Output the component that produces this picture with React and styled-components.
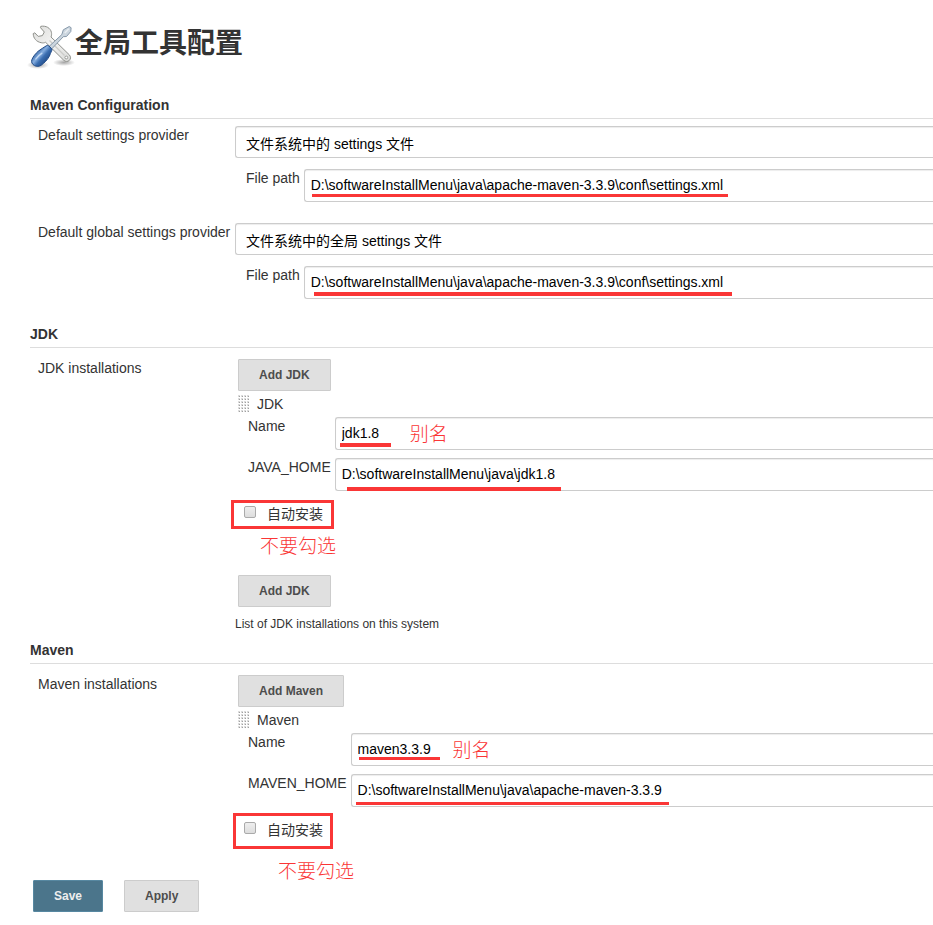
import React, { useState } from 'react'
import styled, { createGlobalStyle } from 'styled-components'

const colors = {
    text: '#333',
    border: '#ccc',
    line: '#ddd',
    mark: '#fa3636',
    primary: '#4b758b',
}

const settingsPath = 'D:\\softwareInstallMenu\\java\\apache-maven-3.3.9\\conf\\settings.xml'

const ToolsIcon = () => (
    <svg width="48" height="48" viewBox="0 0 48 48" aria-hidden="true">
        <defs>
            <linearGradient id="steel" x1="0" y1="0" x2="1" y2="1">
                <stop offset="0" stopColor="#dcdcda" />
                <stop offset="0.5" stopColor="#f4f4f3" />
                <stop offset="1" stopColor="#d8d9d7" />
            </linearGradient>
            <linearGradient id="handle" x1="0.2" y1="0.3" x2="0.75" y2="0.8">
                <stop offset="0" stopColor="#3465a4" />
                <stop offset="0.35" stopColor="#86aee0" />
                <stop offset="0.6" stopColor="#3a6db0" />
                <stop offset="1" stopColor="#204a87" />
            </linearGradient>
            <radialGradient id="shade">
                <stop offset="0" stopColor="#000" stopOpacity="0.35" />
                <stop offset="1" stopColor="#000" stopOpacity="0" />
            </radialGradient>
        </defs>
        <ellipse cx="11" cy="43" rx="11" ry="4" fill="url(#shade)" />
        <ellipse cx="37" cy="40.500" rx="11" ry="3.500" fill="url(#shade)" />
        <path
            d="M13.800 4.300c5.200-.8 9.600 1.600 10.600 6 .4 1.700.2 3.200-.4 4.700L42.300 32.800c1.700 1.900 1.600 4.200 0 5.600-1.600 1.500-3.900 1.500-5.600-.2L18.600 20.300c-1.400.6-2.800.8-4.400.4C9.400 19.800 6.300 16.300 6.200 11.600l1.600-.8 3.400 3.600 4.200-.8 1.900-3.600-3.800-4.300z"
            fill="url(#steel)"
            stroke="#8f918c"
            strokeLinejoin="round"
        />
        <path d="M22.500 18.500l15 15" stroke="#cbccc9" strokeWidth="1.200" />
        <circle cx="39.300" cy="35.500" r="1.400" fill="#fff" stroke="#888a85" strokeWidth="0.800" />
        <path
            d="M22.200 24.300L34.800 12.600l1.500-4.800 5.900-3.300 1.900 1.200-.3 3.800-4.300 5-3.200.2L24.800 26.800z"
            fill="#cbd5de"
            stroke="#8799aa"
            strokeLinejoin="round"
        />
        <path d="M37.800 11l4-4.200" stroke="#e9eef2" strokeWidth="1.400" />
        <path
            d="M19.300 23.800c.9-.6 1.800-.5 2.500.1l2.600 2.600c.7.8.7 1.700.1 2.600-1 1.600-1.300 3.400-2.100 5-1.800 3.600-4.900 6.600-8.300 9.200-1.800 1.300-4.600 1.400-6.600.3-2.400-1.300-3.500-3.600-2.600-6 1.300-3.200 3.600-5.900 6.300-8.400 2.500-2.300 5.500-3.300 8.100-5.400z"
            fill="url(#handle)"
            stroke="#204a87"
        />
        <path d="M8.800 37c1.600-2.600 3.600-4.300 6-5.700" fill="none" stroke="#c3d9f3" strokeWidth="1.400" strokeLinecap="round" />
    </svg>
)

const DragHandle = () => (
    <svg width="12" height="18" viewBox="0 0 12 18" aria-hidden="true">
        {[0, 3, 6, 9, 12, 15].map(y =>
            [0, 3, 6, 9].map(x => (
                <g key={`${x}-${y}`}>
                    <rect x={x} y={y} width="2" height="2" fill="#dcdcdc" />
                    <rect x={x + 1} y={y + 1} width="1" height="1" fill="#a0a0a0" />
                </g>
            ))
        )}
    </svg>
)

const PathField = ({ id, label, value, mark, note }) => {
    const [text, setText] = useState(value)

    return (
        <>
            <Label htmlFor={id}>{label}</Label>
            <InputArea>
                <Input id={id} value={text} onChange={e => setText(e.target.value)} />
                <Underline $left={mark.left} $top={mark.top} $width={mark.width} $thick={mark.thick} />
                {note && <Note $left={note} $top={3}>别名</Note>}
            </InputArea>
        </>
    )
}

const Provider = ({ id, label, option, mark }) => (
    <Row>
        <RowLabel htmlFor={id}>{label}</RowLabel>
        <div>
            <Select id={id}>
                <option>{option}</option>
            </Select>
            <Fields $indent={11} $top={11}>
                <PathField id={`${id}-path`} label="File path" value={settingsPath} mark={mark} />
            </Fields>
        </div>
    </Row>
)

const Installation = ({ tool, homeLabel, name, home, nameMark, homeMark, nameNote, frame, note }) => (
    <>
        <Button type="button" $inset>Add {tool}</Button>
        <ToolTitle>
            <DragHandle />
            {tool}
        </ToolTitle>
        <Fields $indent={13} $top={4}>
            <PathField id={`${tool}-name`} label="Name" value={name} mark={nameMark} note={nameNote} />
            <PathField id={`${tool}-home`} label={homeLabel} value={home} mark={homeMark} />
        </Fields>
        <AutoInstall>
            <Checkbox type="checkbox" id={`${tool}-auto`} />
            <Label htmlFor={`${tool}-auto`}>自动安装</Label>
            <Frame $left={frame.left} $top={frame.top} $width={frame.width} $height={frame.height} />
            <Note $left={note.left} $top={note.top}>不要勾选</Note>
        </AutoInstall>
    </>
)

export default function App() {
    return (
        <>
            <GlobalStyle />
            <Page onSubmit={e => e.preventDefault()}>
                <Header>
                    <ToolsIcon />
                    <h1>全局工具配置</h1>
                </Header>

                <SectionTitle>Maven Configuration</SectionTitle>
                <Section $top={7} $bottom={25}>
                    <Provider
                        id="settings"
                        label="Default settings provider"
                        option="文件系统中的 settings 文件"
                        mark={{ left: 8, top: 25, width: 416, thick: 3 }}
                    />
                    <Provider
                        id="global-settings"
                        label="Default global settings provider"
                        option="文件系统中的全局 settings 文件"
                        mark={{ left: 10, top: 26, width: 418, thick: 4 }}
                    />
                </Section>

                <SectionTitle>JDK</SectionTitle>
                <Section $top={11} $bottom={8}>
                    <Row>
                        <RowLabel as="span">JDK installations</RowLabel>
                        <div>
                            <Installation
                                tool="JDK"
                                homeLabel="JAVA_HOME"
                                name="jdk1.8"
                                home="D:\softwareInstallMenu\java\jdk1.8"
                                nameMark={{ left: 5, top: 26, width: 51, thick: 4 }}
                                homeMark={{ left: 12, top: 29, width: 214, thick: 4 }}
                                nameNote={75}
                                frame={{ left: -4, top: -5, width: 103, height: 29 }}
                                note={{ left: 25, top: 27 }}
                            />
                            <AddAgain>
                                <Button type="button" $inset>Add JDK</Button>
                            </AddAgain>
                            <Help>List of JDK installations on this system</Help>
                        </div>
                    </Row>
                </Section>

                <SectionTitle>Maven</SectionTitle>
                <Section $top={11} $bottom={41}>
                    <Row>
                        <RowLabel as="span">Maven installations</RowLabel>
                        <div>
                            <Installation
                                tool="Maven"
                                homeLabel="MAVEN_HOME"
                                name="maven3.3.9"
                                home="D:\softwareInstallMenu\java\apache-maven-3.3.9"
                                nameMark={{ left: 8, top: 24, width: 81, thick: 3 }}
                                homeMark={{ left: 5, top: 28, width: 313, thick: 3 }}
                                nameNote={102}
                                frame={{ left: -2, top: -8, width: 100, height: 36 }}
                                note={{ left: 43, top: 36 }}
                            />
                        </div>
                    </Row>
                </Section>

                <Actions>
                    <Button type="submit" $primary>Save</Button>
                    <Button type="button">Apply</Button>
                </Actions>
            </Page>
        </>
    )
}

const GlobalStyle = createGlobalStyle`
    * {
        box-sizing: border-box;
    }
    body {
        margin: 0;
        background-color: #fff;
        color: ${colors.text};
        font-family: "Liberation Sans", "Noto Sans CJK SC", sans-serif;
        font-size: 14px;
        line-height: 18px;
    }
    input, select, button {
        font-family: inherit;
    }
`
const Page = styled.form`
    padding: 22px 0 13px 30px;
    overflow: hidden;
`
const Header = styled.header`
    display: flex;
    align-items: center;
    height: 48px;
    margin: 0 0 25px -3px;

    h1 {
        margin: 0;
        font-size: 28px;
        line-height: 40px;
        padding-bottom: 4px;
    }
`
const SectionTitle = styled.h2`
    margin: 0;
    padding-bottom: 3px;
    border-bottom: 1px solid ${colors.line};
    font-size: 14px;
    line-height: 20px;
`
const Section = styled.section`
    display: flex;
    flex-direction: column;
    gap: 21px;
    padding-top: ${({ $top }) => $top}px;
    padding-bottom: ${({ $bottom }) => $bottom}px;
`
const Row = styled.div`
    display: grid;
    grid-template-columns: 205px 1fr;
`
const Label = styled.label`
    white-space: nowrap;
`
const RowLabel = styled(Label)`
    padding-left: 8px;
`
/* fields run off to the right edge, so they have no right border */
const Select = styled.select`
    appearance: none;
    display: block;
    width: 100%;
    height: 32px;
    padding: 4px 10px 0;
    border: 1px solid ${colors.border};
    border-right: 0;
    border-radius: 3px 0 0 3px;
    background-color: #fff;
    box-shadow: inset 0 1px 1px rgba(0, 0, 0, 0.075);
    color: #000;
    font-size: 14px;
`
const Fields = styled.div`
    display: grid;
    grid-template-columns: auto 1fr;
    column-gap: 4px;
    row-gap: 8px;
    margin-top: ${({ $top }) => $top}px;
    padding-left: ${({ $indent }) => $indent}px;
`
const InputArea = styled.div`
    position: relative;
`
const Input = styled.input`
    display: block;
    width: 100%;
    height: 33px;
    padding: 0 6px 2px;
    border: 1px solid ${colors.border};
    border-right: 0;
    border-radius: 3px 0 0 3px;
    box-shadow: inset 0 1px 1px rgba(0, 0, 0, 0.075);
    color: #000;
    font-size: 14px;
`
const Underline = styled.span`
    position: absolute;
    left: ${({ $left }) => $left}px;
    top: ${({ $top }) => $top}px;
    width: ${({ $width }) => $width}px;
    height: ${({ $thick }) => $thick}px;
    background-color: ${colors.mark};
`
const Note = styled.span`
    position: absolute;
    left: ${({ $left }) => $left}px;
    top: ${({ $top }) => $top}px;
    color: ${colors.mark};
    font-family: "Noto Sans CJK SC", sans-serif;
    font-size: 19px;
    font-weight: 300;
    line-height: 26px;
    white-space: nowrap;
    pointer-events: none;
`
const Frame = styled.span`
    position: absolute;
    left: ${({ $left }) => $left}px;
    top: ${({ $top }) => $top}px;
    width: ${({ $width }) => $width}px;
    height: ${({ $height }) => $height}px;
    border: 3px solid ${colors.mark};
    pointer-events: none;
`
const ToolTitle = styled.div`
    display: flex;
    align-items: center;
    gap: 7px;
    margin-top: 4px;
    padding-left: 3px;
`
const AutoInstall = styled.div`
    position: relative;
    display: flex;
    align-items: flex-start;
    gap: 11px;
    margin-top: 14px;
    padding-left: 9px;
`
const Checkbox = styled.input`
    appearance: none;
    width: 12px;
    height: 12px;
    margin: 1px 0 0;
    border: 1px solid #aaa;
    border-radius: 2px;
    background-image: linear-gradient(#eee, #ddd);

    &:checked {
        background: ${colors.primary};
    }
`
const AddAgain = styled.div`
    margin-top: 52px;
`
const Help = styled.div`
    margin-top: 9px;
    font-size: 12px;
    line-height: 16px;
`
const Button = styled.button`
    display: block;
    height: 32px;
    margin: 0 0 0 ${({ $inset }) => $inset ? "3px" : "0"};
    padding: 0 20px;
    border: 1px solid ${({ $primary }) => $primary ? "#5788a1" : colors.border};
    border-radius: 1px;
    background-color: ${({ $primary }) => $primary ? colors.primary : "#e0e0e0"};
    color: ${({ $primary }) => $primary ? "#eee" : "#4d4d4d"};
    font-size: 12px;
    font-weight: bold;
    cursor: pointer;

    &:hover {
        opacity: 0.8;
    }
`
const Actions = styled.div`
    display: flex;
    gap: 21px;
    padding-left: 3px;
`
